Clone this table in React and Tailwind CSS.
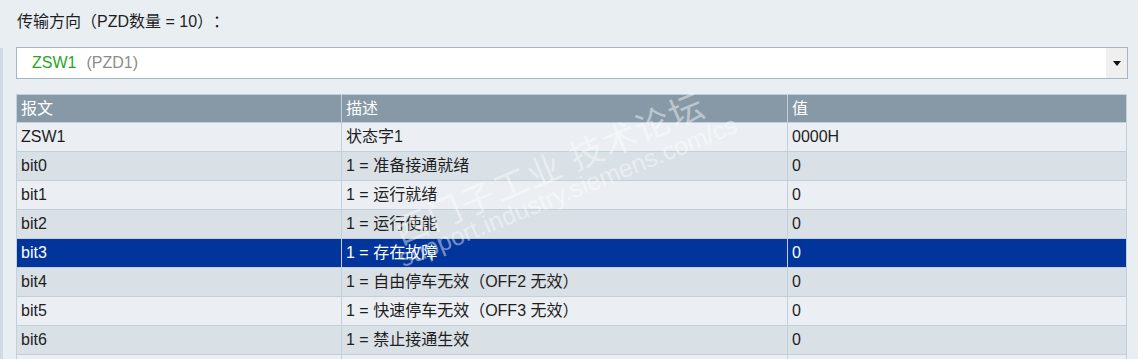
const rows = [
  ["ZSW1", "状态字1", "0000H"],
  ["bit0", "1 = 准备接通就绪", "0"],
  ["bit1", "1 = 运行就绪", "0"],
  ["bit2", "1 = 运行使能", "0"],
  ["bit3", "1 = 存在故障", "0"],
  ["bit4", "1 = 自由停车无效（OFF2 无效）", "0"],
  ["bit5", "1 = 快速停车无效（OFF3 无效）", "0"],
  ["bit6", "1 = 禁止接通生效", "0"],
  ["bit7", "1 = 存在报警", "0"],
];

const SELECTED = 4;

function Row({ cells, index }) {
  const selected = index === SELECTED;
  const bg = selected ? "bg-[#01359b] text-white" : index % 2 === 0 ? "bg-[#ebeff3] text-[#1e1e1e]" : "bg-[#d9e0e6] text-[#1e1e1e]";
  return (
    <div className={`grid grid-cols-[325px_446px_1fr] h-[29px] border-b border-[#c3cfd9] ${bg}`}>
      {cells.map((c, i) => (
        <div key={i} className={`flex items-center pl-[4px] whitespace-nowrap ${i < 2 ? "border-r border-[#c3cfd9]" : ""}`}>
          {c}
        </div>
      ))}
    </div>
  );
}

export default function App() {
  return (
    <div
      className="relative w-[1138px] h-[359px] overflow-hidden bg-[#e9eef3] text-[16px] [text-spacing-trim:space-all]"
      style={{ fontFamily: '"Liberation Sans", "Noto Sans CJK SC", sans-serif' }}
    >
      <div className="absolute left-0 top-[48px] w-[3px] h-[311px] bg-[#d2dbe3]" />
      <div className="pl-[17px] pr-[10px]">
        <div className="h-[47px] flex items-center text-[#1e1e1e] pb-[3px]">传输方向（PZD数量 = 10）：</div>
        <div className="flex h-[32px] w-[1112px] -ml-px border border-[#a9b6c2] bg-white">
          <div className="flex-1 flex items-center pl-[15px] gap-[10px]">
            <span className="text-[#26a626]">ZSW1</span>
            <span className="text-[#8c8c8c]">(PZD1)</span>
          </div>
          <div className="w-[21px] bg-[#efefef] flex items-center justify-center">
            <svg width="8" height="5" viewBox="0 0 8 5">
              <path d="M0 0h8L4 5z" fill="#111" />
            </svg>
          </div>
        </div>
        <div className="mt-[15px] w-[1111px] -ml-px border-l border-r border-t border-[#c3cfd9]">
          <div className="grid grid-cols-[325px_446px_1fr] h-[28px] bg-[#8799a7] text-white border-b border-[#c3cfd9]">
            <div className="flex items-center pl-[4px] border-r border-[#c3cfd9]">报文</div>
            <div className="flex items-center pl-[4px] border-r border-[#c3cfd9]">描述</div>
            <div className="flex items-center pl-[4px]">值</div>
          </div>
          {rows.map((r, i) => (
            <Row key={i} cells={r} index={i} />
          ))}
        </div>
      </div>
      {/* watermark */}
      <div className="absolute left-[396px] top-[217px] h-[34px] rotate-[-23deg] origin-left pointer-events-none text-white/45 text-[34px] leading-[34px] tracking-[2px] whitespace-nowrap">
        西门子工业<span className="ml-[10px]">技术论坛</span>
      </div>
      <div className="absolute left-[400px] top-[246px] h-[26px] rotate-[-22deg] origin-left pointer-events-none text-white/45 text-[25px] leading-[26px] whitespace-nowrap">
        support.industry.siemens.com/cs
      </div>
    </div>
  );
}
